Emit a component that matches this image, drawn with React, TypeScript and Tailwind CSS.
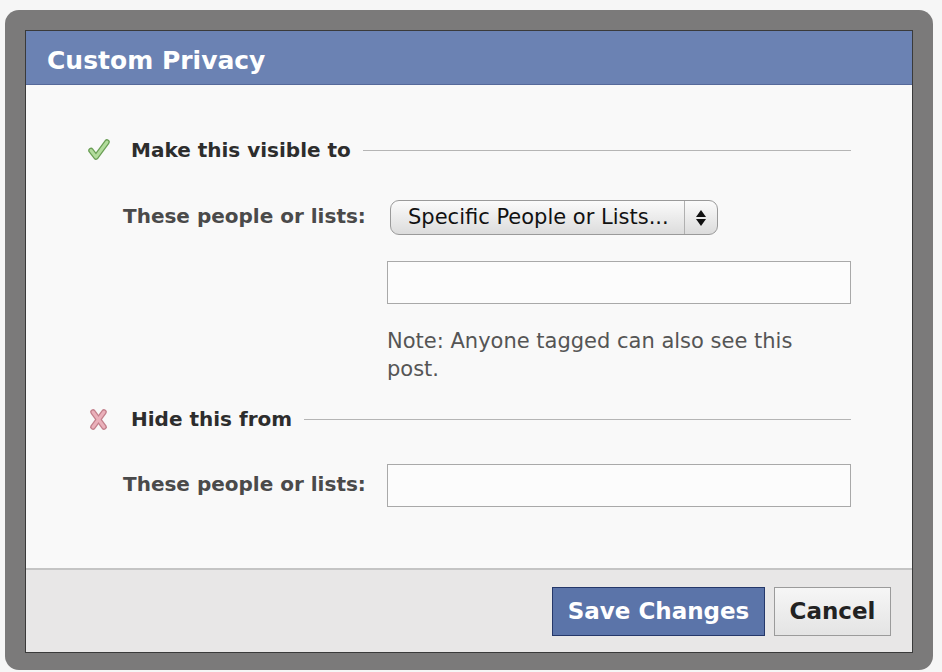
import React from "react";

const CheckIcon = () => (
  <svg width="22" height="22" viewBox="0 0 22 22" className="ml-[1px]">
    <polyline points="3,11.5 8,18 19,3" fill="none" stroke="#6a9e55" strokeWidth="5.5" strokeLinejoin="round" strokeLinecap="round" />
    <polyline points="3,11.5 8,18 19,3" fill="none" stroke="#b2dc9c" strokeWidth="3" strokeLinejoin="round" strokeLinecap="round" />
  </svg>
);

const CrossIcon = () => (
  <svg width="22" height="22" viewBox="0 0 22 22" className="ml-[1px]">
    <g fill="none" strokeLinecap="round">
      <line x1="5" y1="4" x2="16" y2="19" stroke="#c27f8b" strokeWidth="5.5" />
      <line x1="16" y1="4" x2="5" y2="19" stroke="#c27f8b" strokeWidth="5.5" />
      <line x1="5" y1="4" x2="16" y2="19" stroke="#eab0ba" strokeWidth="3" />
      <line x1="16" y1="4" x2="5" y2="19" stroke="#eab0ba" strokeWidth="3" />
    </g>
  </svg>
);

const SectionHead = ({ icon, title }: { icon: React.ReactNode; title: string }) => (
  <div className="flex items-center">
    <div className="flex w-[44px] justify-start">{icon}</div>
    <span className="whitespace-nowrap text-[20px] font-semibold text-[#2d2d2d]">{title}</span>
    <div className="ml-3 h-px flex-1 bg-[#b5b5b5]" />
  </div>
);

const Label = ({ children }: { children: React.ReactNode }) => (
  <div className="mb-[4px] w-[300px] shrink-0 pl-[36px] text-[20px] font-bold text-[#4a4a4a] whitespace-nowrap">
    {children}
  </div>
);

export default function App() {
  return (
    <div
      className="h-[672px] w-[942px] overflow-hidden bg-[#f6f6f6] pl-[5px] pt-[10px]"
      style={{ fontFamily: '"DejaVu Sans", "Liberation Sans", sans-serif' }}
    >
      <div className="h-[660px] w-[928px] rounded-[14px] bg-[#7b7a7a] p-5">
        <div className="flex h-[623px] flex-col border border-[#3a3a3a] bg-[#f9f9f9]">
          <div className="flex h-[54px] shrink-0 items-center border-b border-[#56699a] bg-[#6b82b3] pl-[21px] pt-[6px]">
            <h1 className="text-[25px] font-bold text-white">Custom Privacy</h1>
          </div>

          <div className="flex-1 pl-[61px] pr-[61px] pt-[50px]">
            <SectionHead icon={<CheckIcon />} title="Make this visible to" />

            <div className="mt-[35px] flex items-center">
              <Label>These people or lists:</Label>
              <div className="ml-[3px] flex h-[35px] w-[328px] items-center rounded-[9px] border border-[#9a9a9a] bg-gradient-to-b from-[#fbfbfb] to-[#dcdcdc]">
                <span className="flex-1 pl-[17px] text-[21px] text-[#111]">Specific People or Lists...</span>
                <div className="flex h-full w-[33px] flex-col items-center justify-center gap-[2px] border-l border-[#b0b0b0]">
                  <svg width="10" height="7" viewBox="0 0 10 7"><path d="M5 0 L10 7 L0 7 Z" fill="#111" /></svg>
                  <svg width="10" height="7" viewBox="0 0 10 7"><path d="M0 0 L10 0 L5 7 Z" fill="#111" /></svg>
                </div>
              </div>
            </div>

            <div className="ml-[300px] mt-[26px] h-[43px] border border-[#a9a9a9] bg-[#fcfcfc]" />

            <p className="ml-[300px] mt-[23px] text-[21px] leading-[28px] text-[#555]">
              Note: Anyone tagged can also see this
              <br />
              post.
            </p>

            <div className="mt-[21px]">
              <SectionHead icon={<CrossIcon />} title="Hide this from" />
            </div>

            <div className="mt-[30px] flex items-center">
              <Label>These people or lists:</Label>
              <div className="h-[43px] flex-1 border border-[#a9a9a9] bg-[#fcfcfc]" />
            </div>
          </div>

          <div className="flex h-[84px] shrink-0 items-center justify-end gap-[9px] border-t-2 border-[#c4c4c4] bg-[#e8e7e7] pr-[21px]">
            <button className="h-[49px] w-[213px] border border-[#25386a] bg-[#5b74a9] text-[23px] font-bold text-white">
              Save Changes
            </button>
            <button className="h-[49px] w-[117px] border border-[#9b9b9b] bg-gradient-to-b from-[#f6f6f6] to-[#e4e4e4] text-[23px] font-bold text-[#222]">
              Cancel
            </button>
          </div>
        </div>
      </div>
    </div>
  );
}
